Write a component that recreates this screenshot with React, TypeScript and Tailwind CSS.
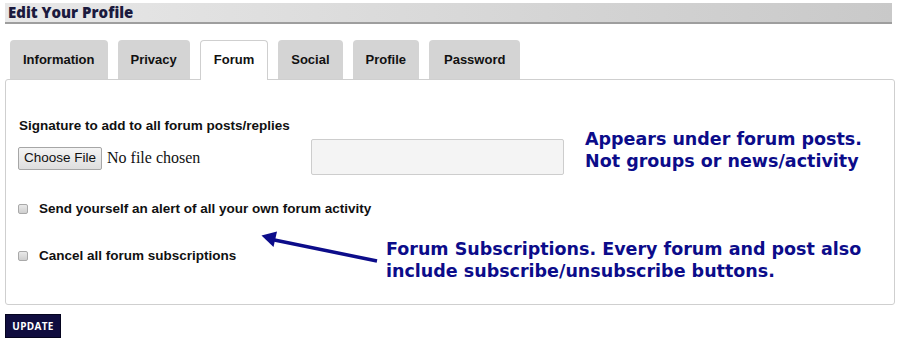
import React from 'react';

const tabs = ['Information', 'Privacy', 'Forum', 'Social', 'Profile', 'Password'];

const Checkbox = () => (
	<span className="block w-[10px] h-[10px] rounded-[2px] border border-[#a9a9a9] bg-gradient-to-b from-[#e9e9e9] to-[#cfcfcf] shrink-0" />
);

const App = () => {
	return (
		<div className="w-[900px] h-[343px] bg-white px-[5px] pt-[3px] overflow-hidden font-['Liberation_Sans',Arial,sans-serif]">
			{/* header bar */}
			<div className="h-[21px] pl-[3px] bg-gradient-to-r from-[#e8e8e8] to-[#c9c9c9] border-b-[2px] border-[#9e9e9e] mr-[3px]">
				<h1 className="font-['Open_Sans',sans-serif] font-extrabold text-[15px] leading-[19px] text-[#1b1a3e]">
					Edit Your Profile
				</h1>
			</div>

			{/* tabs */}
			<ul className="flex gap-[10px] pl-[5px] mt-[16px] relative z-10">
				{tabs.map((t) => (
					<li
						key={t}
						className={
							t === 'Forum'
								? 'h-[40px] px-[13px] rounded-t-[4px] bg-white border border-b-0 border-[#cfcfcf] text-[13px] font-bold text-[#111] leading-[38px] -mb-px'
								: t === 'Password'
									? 'h-[39px] px-[15px] rounded-t-[4px] bg-[#d4d4d4] text-[13px] font-bold text-[#111] leading-[39px]'
									: 'h-[39px] px-[13px] rounded-t-[4px] bg-[#d4d4d4] text-[13px] font-bold text-[#111] leading-[39px]'
						}
					>
						{t}
					</li>
				))}
			</ul>

			{/* panel */}
			<div className="relative h-[226px] border border-[#cfcfcf] rounded-[3px] pl-[12px]">
				<div className="flex items-start">
					<div className="w-[293px] mt-[38px]">
						<p className="ml-px text-[13.5px] leading-[16px] font-bold text-[#111]">
							Signature to add to all forum posts/replies
						</p>
						<div className="flex items-center mt-[12px]">
							<button className="h-[23px] w-[84px] border border-[#a6a6a6] rounded-[2px] bg-gradient-to-b from-[#f4f4f4] to-[#dedede] text-[13.5px] text-[#111]">
								Choose File
							</button>
							<span className="ml-[5px] font-['Liberation_Serif',serif] text-[16px] text-[#111]">
								No file chosen
							</span>
						</div>
					</div>
					<div className="mt-[59px] w-[253px] h-[36px] border border-[#cdcdcd] rounded-[2px] bg-[#f4f4f4]" />
					<p className="mt-[48px] ml-[21px] font-['DejaVu_Sans',Verdana,sans-serif] font-bold text-[17.5px] leading-[22px] text-[#0c0c8a] whitespace-nowrap">
						Appears under forum posts.
						<br />
						Not groups or news/activity
					</p>
				</div>

				<label className="flex items-center gap-[11px] mt-[26px]">
					<Checkbox />
					<span className="text-[13.5px] leading-[16px] font-bold text-[#111]">
						Send yourself an alert of all your own forum activity
					</span>
				</label>

				<label className="flex items-center gap-[11px] mt-[31px]">
					<Checkbox />
					<span className="text-[13.5px] leading-[16px] font-bold text-[#111]">
						Cancel all forum subscriptions
					</span>
				</label>

				{/* annotation overlay */}
				<svg className="absolute left-[249px] top-[145px]" width="135" height="42" viewBox="255 225 135 42">
					<line x1="272" y1="239.5" x2="377" y2="261" stroke="#0c0c8a" strokeWidth="3.5" />
					<polygon points="261.5,235.5 277,231.5 273.5,247" fill="#0c0c8a" />
				</svg>
				<p className="absolute left-[380px] top-[158px] font-['DejaVu_Sans',Verdana,sans-serif] font-bold text-[17.5px] leading-[22px] text-[#0c0c8a] whitespace-nowrap">
					Forum Subscriptions. Every forum and post also
					<br />
					include subscribe/unsubscribe buttons.
				</p>
			</div>

			<button className="mt-[9px] w-[56px] h-[24px] bg-[#100d3f] border border-[#05041f] text-white text-[10px] font-bold font-['Open_Sans',sans-serif] tracking-[0.3px]">
				UPDATE
			</button>
		</div>
	);
};

export default App;
